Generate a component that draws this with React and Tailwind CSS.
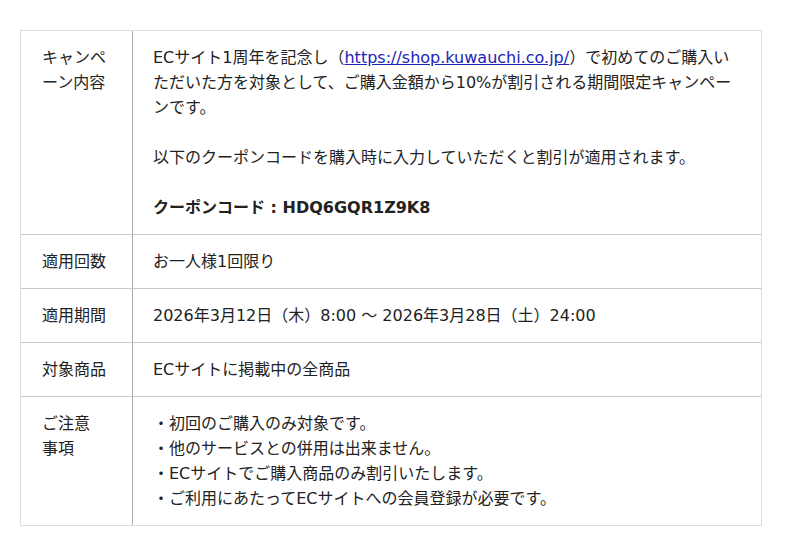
const rows = [
  {
    label: ['キャンペ', 'ーン内容'],
    body: (
      <>
        <p>
          ECサイト1周年を記念し（
          <a href="#" className="text-[#2323b8] underline">https://shop.kuwauchi.co.jp/</a>
          ）で初めてのご購入いただいた方を対象として、ご購入金額から10%が割引される期間限定キャンペーンです。
        </p>
        <p className="mt-[25px]">以下のクーポンコードを購入時に入力していただくと割引が適用されます。</p>
        <p className="mt-[25px] font-bold">クーポンコード : HDQ6GQR1Z9K8</p>
      </>
    ),
  },
  { label: ['適用回数'], body: <p>お一人様1回限り</p> },
  { label: ['適用期間'], body: <p>2026年3月12日（木）8:00 ～ 2026年3月28日（土）24:00</p> },
  { label: ['対象商品'], body: <p>ECサイトに掲載中の全商品</p> },
  {
    label: ['ご注意', '事項'],
    body: (
      <ul>
        <li>・初回のご購入のみ対象です。</li>
        <li>・他のサービスとの併用は出来ません。</li>
        <li>・ECサイトでご購入商品のみ割引いたします。</li>
        <li>・ご利用にあたってECサイトへの会員登録が必要です。</li>
      </ul>
    ),
  },
];

const App = () => {
  return (
    <div
      className="min-h-[556px] bg-white pt-[30px] pl-[20px] text-[16px] leading-[25px] text-[#222]"
      style={{ fontFamily: '"DejaVu Sans", "Noto Sans CJK JP", sans-serif' }}
    >
      <div className="w-[742px] border border-[#ddd]">
        {rows.map((row, i) => (
          <div
            key={i}
            className={`grid grid-cols-[112px_1fr] ${i > 0 ? 'border-t border-[#c8c8c8]' : ''}`}
          >
            <div className="border-r border-[#aaa] px-[21px] py-[14px]">
              {row.label.map((l, j) => (
                <div key={j}>{l}</div>
              ))}
            </div>
            <div className="pl-[20px] pr-[24px] py-[14px]">{row.body}</div>
          </div>
        ))}
      </div>
    </div>
  );
};

export default App;
